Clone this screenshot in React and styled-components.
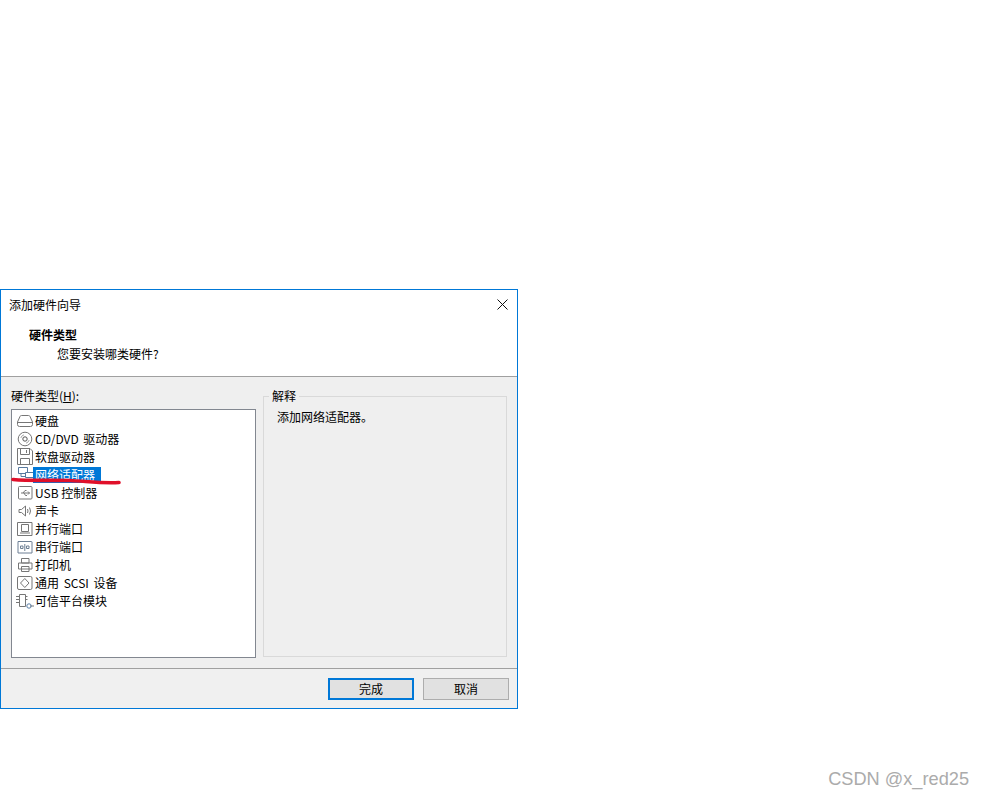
import React from "react";
import styled, { createGlobalStyle } from "styled-components";

const Global = createGlobalStyle`
  html, body { margin: 0; padding: 0; background: #fff; }
  body { font-family: "Noto Sans CJK SC", "Liberation Sans", sans-serif; font-size: 12px; color: #000; }
`;
const Page = styled.div`
  position: relative;
  width: 985px;
  height: 798px;
  padding-top: 289px;
  box-sizing: border-box;
  overflow: hidden;
`;
const Dialog = styled.div`
  position: relative;
  width: 518px;
  height: 420px;
  box-sizing: border-box;
  border: 1px solid #0078d7;
  display: flex;
  flex-direction: column;
  background: #f0f0f0;
`;
const Header = styled.header`
  height: 87px;
  box-sizing: border-box;
  background: #fff;
  border-bottom: 1px solid #a0a0a0;
  flex: none;
  display: flex;
  flex-direction: column;
`;
const TitleBar = styled.div`
  height: 28px;
  padding-left: 8px;
  display: flex;
  align-items: center;
  justify-content: space-between;
`;
const CloseBtn = styled.svg`
  width: 11px;
  height: 11px;
  margin: 0 9px 0 0;
  flex: none;
`;
const Heading = styled.div`
  font-weight: 700;
  line-height: 16px;
  margin: 9px 0 0 28px;
`;
const SubHeading = styled.div`
  line-height: 16px;
  margin: 3px 0 0 56px;
`;
const Main = styled.main`
  flex: 1;
  display: flex;
  padding: 5px 10px 0;
  gap: 7px;
  background: #efefef;
  min-height: 0;
`;
const LeftCol = styled.div`
  width: 245px;
  display: flex;
  flex-direction: column;
`;
const ListLabel = styled.label`
  height: 27px;
  line-height: 27px;
  display: block;
  u { text-decoration: underline; }
`;
const List = styled.ul`
  margin: 0;
  padding: 2px 0 0 4px;
  list-style: none;
  width: 245px;
  height: 249px;
  box-sizing: border-box;
  background: #fff;
  border: 1px solid #828790;
`;
const Row = styled.li`
  height: 18px;
  display: flex;
  align-items: center;
`;
const IconBox = styled.svg`
  width: 18px;
  height: 18px;
  flex: none;
  fill: none;
  stroke: #767676;
  stroke-width: 1;
`;
const RowText = styled.span`
  line-height: 16px;
  height: 16px;
  padding: 0 6px 0 2px;
  margin-left: -1px;
  white-space: pre;
  word-spacing: ${p => (p.$wide ? "2px" : "0")};
  background: ${p => (p.$selected ? "#0078d7" : "transparent")};
  color: ${p => (p.$selected ? "#fff" : "#000")};
`;
const Group = styled.fieldset`
  margin: 7px 0 0 0;
  padding: 0;
  width: 244px;
  height: 268px;
  box-sizing: border-box;
  border: 1px solid #d9d9d9;
  min-inline-size: 0;
`;
const Legend = styled.legend`
  padding: 0 3px;
  margin-left: 5px;
  line-height: 14px;
  font-size: 12px;
`;
const GroupText = styled.p`
  margin: 6px 0 0 13px;
  line-height: 16px;
`;
const Footer = styled.footer`
  height: 40px;
  flex: none;
  box-sizing: border-box;
  background: #f0f0f0;
  border-top: 1px solid #a0a0a0;
  padding: 9px 8px 0 0;
  display: flex;
  justify-content: flex-end;
  align-items: flex-start;
  gap: 9px;
`;
const Button = styled.button`
  width: 86px;
  height: 22px;
  padding: 0;
  box-sizing: border-box;
  background: #e1e1e1;
  border: ${p => (p.$primary ? "2px solid #0078d7" : "1px solid #adadad")};
  font: inherit;
  color: #000;
  line-height: 18px;
`;
const Squiggle = styled.svg`
  position: absolute;
  left: 0;
  top: 470px;
  width: 130px;
  height: 20px;
`;
const Watermark = styled.div`
  position: absolute;
  right: 16px;
  top: 767px;
  font-family: "Liberation Sans", Arial, sans-serif;
  font-size: 18.2px;
  line-height: 24px;
  color: #ababab;
  white-space: pre;
`;

const I = ({ children }) => <IconBox viewBox="0 0 18 18">{children}</IconBox>;
const icons = {
  disk: <I><path d="M1.5 10 L4 4.5 Q4.3 3.5 5.5 3.5 H12.5 Q13.7 3.5 14 4.5 L16.5 10 V12.5 Q16.5 14.5 14.5 14.5 H3.5 Q1.5 14.5 1.5 12.5 Z M1.5 10.5 H16.5" /></I>,
  cd: <I><circle cx="9" cy="9" r="6.8" /><circle cx="9" cy="9" r="2.2" stroke="#555" /><path d="M4.8 8 A4.5 4.5 0 0 1 8 4.8 M13.2 10 A4.5 4.5 0 0 1 10 13.2" stroke="#aaa" /></I>,
  floppy: <I><path d="M1.5 .5 H14 L16.5 3 V16.5 H1.5 Z M4.5 .5 V6.5 H13.5 V.5 M4.5 16.5 V10.5 H13.5 V16.5 M10.5 2 V5" /></I>,
  net: <I><path d="M2.5 1.5 H11.5 V7.5 H2.5 Z M5 7.5 V10.5 H9" stroke="#56789e" /><path d="M9.5 6.5 H17.5 V11.5 H9.5 Z" stroke="#56789e" fill="#fff" /></I>,
  usb: <I><path d="M2.5 3.5 Q2.5 2.5 3.5 2.5 H15 Q16 2.5 16 3.5 V14 Q16 15 15 15 H3.5 Q2.5 15 2.5 14 Z M5 9 H13.5 M12 7.5 L13.5 9 L12 10.5 M7 9 L9 6.5 H10.5 M8 9 L9.5 11.5 H11" /></I>,
  sound: <I><path d="M3 7.5 H5.5 L9.5 4 V14 L5.5 10.5 H3 Z M11.5 7 Q12.5 9 11.5 11 M13.5 5.5 Q15.5 9 13.5 12.5" /></I>,
  par: <I><path d="M1.5 2.5 H16 V15.5 H1.5 Z M5.5 4.5 H12.5 V11.5 H5.5 Z M4 13 H14" /></I>,
  ser: <I><path d="M2 3.5 H15.5 Q16 3.5 16 4 V15 H2 Z M4.5 8 H7 V10.5 H4.5 Z M10.5 8 H13 V10.5 H10.5 Z M8.8 6 V13" stroke="#6d7f94" /></I>,
  print: <I><path d="M5.5 2.5 H13 V7 H5.5 Z M2.5 7 H16 V13 H2.5 Z M5.5 10.5 H13 V15.5 H5.5 Z" /></I>,
  scsi: <I><rect x="1.5" y="2.5" width="14.5" height="13" rx="1.5" /><path d="M8.8 4.5 L13 9 L8.8 13.5 L4.5 9 Z" /></I>,
  tpm: <I><path d="M3.5 2.5 H9.5 V14.5 H3.5 Z M0 4.5 H3.5 M0 7.5 H3.5 M0 10.5 H3.5 M9.5 4.5 H11.5 M9.5 7.5 H11.5 M14 14 H18" /><circle cx="13" cy="14" r="2.2" stroke="#5a7ea6" /></I>,
};
const rows = [
  ["disk", "硬盘"],
  ["cd", "CD/DVD 驱动器", false, true],
  ["floppy", "软盘驱动器"],
  ["net", "网络适配器", true],
  ["usb", "USB 控制器"],
  ["sound", "声卡"],
  ["par", "并行端口"],
  ["ser", "串行端口"],
  ["print", "打印机"],
  ["scsi", "通用 SCSI 设备", false, true],
  ["tpm", "可信平台模块"],
];

export default function App() {
  return (
    <Page>
      <Global />
      <Dialog>
        <Header>
          <TitleBar>
            <span>添加硬件向导</span>
            <CloseBtn viewBox="0 0 11 11" fill="none" stroke="#111" strokeWidth="1"><path d="M.5.5l10 10M10.5.5l-10 10" /></CloseBtn>
          </TitleBar>
          <Heading>硬件类型</Heading>
          <SubHeading>您要安装哪类硬件?</SubHeading>
        </Header>
        <Main>
          <LeftCol>
            <ListLabel>硬件类型(<u>H</u>):</ListLabel>
            <List>
              {rows.map(([k, t, sel, wide]) => (
                <Row key={k}>{icons[k]}<RowText $selected={sel} $wide={wide}>{t}</RowText></Row>
              ))}
            </List>
          </LeftCol>
          <Group>
            <Legend>解释</Legend>
            <GroupText>添加网络适配器。</GroupText>
          </Group>
        </Main>
        <Footer>
          <Button $primary>完成</Button>
          <Button>取消</Button>
        </Footer>
      </Dialog>
      <Squiggle viewBox="0 0 130 20" fill="none" stroke="#e0102a" strokeWidth="3.6" strokeLinecap="round">
        <path d="M13 9.5 C30 11 48 10 70 10.5 C85 11 100 13.5 119 12.5" />
      </Squiggle>
      <Watermark>CSDN @x_red25</Watermark>
    </Page>
  );
}
